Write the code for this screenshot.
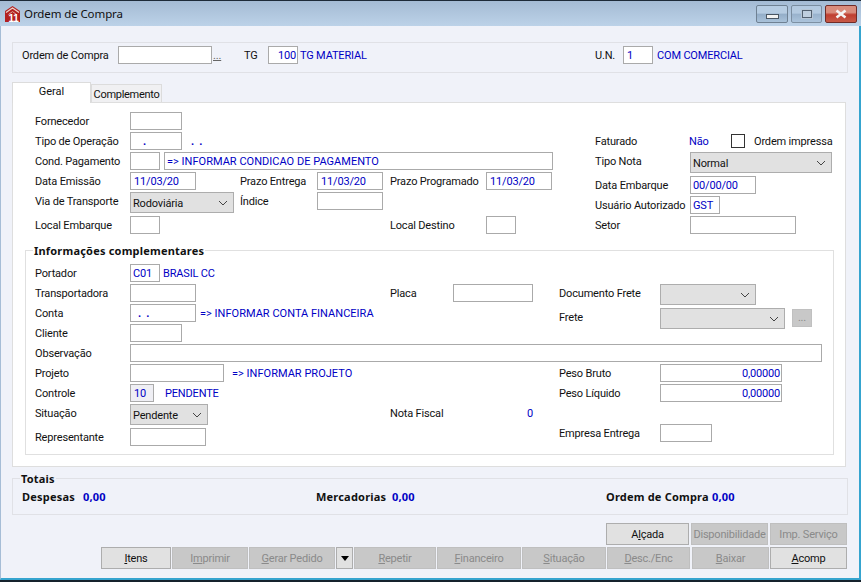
<div class="window">
  <header class="titlebar">
    <svg class="logo" viewBox="0 0 15 16" width="15" height="16" aria-hidden="true">
      <path d="M7.5 0 15 5V16H0V5Z" fill="#b3201f"/>
      <path d="M1 6.5 7.5 2 14 6.5" fill="none" stroke="#ecd2ca" stroke-width="1.3"/>
      <path d="M3.5 8.5 7.5 5.6 11.5 8.5" fill="none" stroke="#dda699" stroke-width="1"/>
      <text x="3.5" y="15.5" class="logo-num">11</text>
    </svg>
    <span class="title">Ordem de Compra</span>
    <div class="controls">
      <div class="ctl"><span class="min"></span></div>
      <div class="ctl mid"><span class="max"></span></div>
      <div class="ctl close">
        <svg viewBox="0 0 14 10" width="14" height="10" aria-hidden="true">
          <path d="M2.5 1.5 11.5 8.5M11.5 1.5 2.5 8.5" stroke="#f4f4f4" stroke-width="2.6"/>
        </svg>
      </div>
    </div>
  </header>

  <main class="body">
    <section class="topbox">
      <span class="t w96">Ordem de Compra</span>
      <span class="inp w94"></span>
      <span class="ellipsis">...</span>
      <span class="t tg">TG</span>
      <span class="inp w30 num">100</span>
      <span class="v ml2 w295">TG MATERIAL</span>
      <span class="t un">U.N.</span>
      <span class="inp w30">1</span>
      <span class="v ml4">COM COMERCIAL</span>
    </section>

    <nav class="tabs">
      <div class="tab active">Geral</div>
      <div class="tab">Complemento</div>
    </nav>

    <section class="panel">
      <div class="upper">
        <div class="col-left">
          <div class="row"><span class="t w95">Fornecedor</span><span class="inp w51"></span></div>
          <div class="row"><span class="t w95">Tipo de Operação</span><span class="inp w51 dot1">.</span><span class="v dots">.&nbsp;&nbsp;.</span></div>
          <div class="row"><span class="t w95">Cond. Pagamento</span><span class="inp w30"></span><span class="inp w388 ml4 long tight">=&gt; INFORMAR CONDICAO DE PAGAMENTO</span></div>
          <div class="row"><span class="t w95">Data Emissão</span><span class="inp w66">11/03/20</span><span class="t w77 ml44">Prazo Entrega</span><span class="inp w66">11/03/20</span><span class="t w96 ml7">Prazo Programado</span><span class="inp w66">11/03/20</span></div>
          <div class="row tall"><span class="t w95">Via de Transporte</span><div class="sel w104">Rodoviária<svg class="chev" viewBox="0 0 10 6" width="10" height="6"><path d="M1 1l4 4 4-4" fill="none" stroke="#444"/></svg></div><span class="t w77 ml6">Índice</span><span class="inp w66"></span></div>
          <div class="row"><span class="t w95">Local Embarque</span><span class="inp w30"></span><span class="t w96 local">Local Destino</span><span class="inp w30"></span></div>
        </div>
        <div class="col-right">
          <div class="row"><span class="t w94">Faturado</span><span class="v w42">Não</span><span class="check"></span><span class="t">Ordem impressa</span></div>
          <div class="row tall"><span class="t w95">Tipo Nota</span><div class="sel w142">Normal<svg class="chev" viewBox="0 0 10 6" width="10" height="6"><path d="M1 1l4 4 4-4" fill="none" stroke="#444"/></svg></div></div>
          <div class="row"><span class="t w95">Data Embarque</span><span class="inp w66 tight">00/00/00</span></div>
          <div class="row"><span class="t w95">Usuário Autorizado</span><span class="inp w30 tight">GST</span></div>
          <div class="row"><span class="t w95">Setor</span><span class="inp w106"></span></div>
        </div>
      </div>

      <div class="group">
        <div class="legend">Informações complementares</div>
        <div class="row"><span class="t w95">Portador</span><span class="inp w30 tight">C01</span><span class="v ml3">BRASIL CC</span></div>
        <div class="row"><span class="t w95">Transportadora</span><span class="inp w66"></span><span class="t placa">Placa</span><span class="inp w80"></span><span class="t w101 ml27">Documento Frete</span><div class="sel w96"><svg class="chev" viewBox="0 0 10 6" width="10" height="6"><path d="M1 1l4 4 4-4" fill="none" stroke="#444"/></svg></div></div>
        <div class="row"><span class="t w95">Conta</span><span class="inp w66 dot2">. &nbsp;.</span><span class="v ml4 w359 long">=&gt; INFORMAR CONTA FINANCEIRA</span>
          <div class="frete"><span class="t w101">Frete</span><div class="sel w125"><svg class="chev" viewBox="0 0 10 6" width="10" height="6"><path d="M1 1l4 4 4-4" fill="none" stroke="#444"/></svg></div><span class="morebtn">...</span></div>
        </div>
        <div class="row"><span class="t w95">Cliente</span><span class="inp w51"></span></div>
        <div class="row"><span class="t w95">Observação</span><span class="inp w692"></span></div>
        <div class="row"><span class="t w95">Projeto</span><span class="inp w94"></span><span class="v ml8 w327 long">=&gt; INFORMAR PROJETO</span><span class="t w101">Peso Bruto</span><span class="inp w122 num">0,00000</span></div>
        <div class="row"><span class="t w95">Controle</span><span class="inp w24 ro">10</span><span class="v ml11 w394">PENDENTE</span><span class="t w101">Peso Líquido</span><span class="inp w122 num">0,00000</span></div>
        <div class="row"><span class="t w95">Situação</span><div class="sel w78">Pendente<svg class="chev" viewBox="0 0 10 6" width="10" height="6"><path d="M1 1l4 4 4-4" fill="none" stroke="#444"/></svg></div><span class="t nf">Nota Fiscal</span><span class="v nf0">0</span></div>
        <div class="row last"><span class="t w95 down">Representante</span><span class="inp w76 down"></span><span class="t w101 emp">Empresa Entrega</span><span class="inp w52"></span></div>
      </div>
    </section>

    <section class="totais">
      <div class="legend tl">Totais</div>
      <div class="tot-row">
        <span class="w61">Despesas</span><span class="bv w233">0,00</span>
        <span class="w76">Mercadorias</span><span class="bv w214">0,00</span>
        <span class="w106">Ordem de Compra</span><span class="bv">0,00</span>
      </div>
    </section>

    <div class="btns r1">
      <button class="on">A<u>l</u>çada</button>
      <button disabled>Disponibilidade</button>
      <button disabled>Imp. Serviço</button>
    </div>
    <div class="btns r2">
      <button class="on"><u>I</u>tens</button>
      <button disabled>I<u>m</u>primir</button>
      <button disabled><u>G</u>erar Pedido</button>
      <button class="on arrow" aria-label="Menu"><span class="tri"></span></button>
      <button disabled><u>R</u>epetir</button>
      <button disabled><u>F</u>inanceiro</button>
      <button disabled><u>S</u>ituação</button>
      <button disabled><u>D</u>esc./Enc</button>
      <button disabled class="gap"><u>B</u>aixar</button>
      <button class="on"><u>A</u>comp</button>
    </div>
  </main>
</div>

<style>
  :global(body) { margin: 0; background: #10202c; }
  .window {
    width: 861px; height: 582px; box-sizing: border-box; overflow: hidden;
    display: flex; flex-direction: column;
    background: #f0f2f9;
    border-top: 1px solid #1d2a38;
    border-bottom: 2px solid #15222c;
    font: 11px/20px Roboto, Tahoma, sans-serif;
    letter-spacing: -.17px;
    color: #111;
  }
  .titlebar {
    height: 25px; flex: none; display: flex; align-items: center;
    padding: 0 4px 0 5px;
    background: linear-gradient(#a4bbd4, #bcd2e8);
  }
  .logo { flex: none; margin-top: 1px; }
  .logo-num { font: bold 10px "Liberation Sans", sans-serif; fill: #fff; }
  .title { margin-left: 4px; font: 11.5px "Noto Sans", sans-serif; letter-spacing: -.1px; color: #101010; }
  .controls { margin-left: auto; display: flex; gap: 3px; margin-top: 1px; }
  .ctl {
    width: 32px; height: 18px; border: 1px solid #6f8193; border-radius: 2px;
    box-sizing: border-box; display: flex; align-items: center; justify-content: center;
    background: linear-gradient(#b6cce2 0 45%, #93adc8 50%, #a9c2da);
  }
  .mid { width: 31px; opacity: .8; }
  .min { width: 11px; height: 3px; margin-top: 4px; background: #f2f2f2; border: 1px solid #4a5663; }
  .max { width: 8px; height: 6px; border: 1px solid #3d4854; outline: 1px solid #b8c6d4; background: #c4d1de; }
  .close { border-color: #702c28; background: linear-gradient(#d98c7c 0 40%, #bf3e30 55%, #c85a48); }

  .body {
    flex: 1; display: flex; flex-direction: column; padding: 16px 0 0 12px;
    border-left: 1px solid #a6bdd6; border-right: 2px solid #35a4cf; border-bottom: 2px solid #35a4cf;
  }
  .topbox {
    width: 836px; height: 31px; box-sizing: border-box; flex: none;
    border: 1px solid #e0e1e6; margin-left: -1px;
    display: flex; align-items: flex-start; padding: 3px 0 0 9px;
  }
  .t, .v { flex: none; white-space: nowrap; }
  .v { color: #0000c4; }
  .inp {
    flex: none; height: 18px; box-sizing: border-box; background: #fff;
    border: 1px solid #aaa; color: #0000c4; padding: 0 0 0 3px; line-height: 18px;
    white-space: nowrap; overflow: hidden;
  }
  .inp.tight { padding-left: 2px; }
  .long { letter-spacing: .02px; }
  .num { text-align: right; padding: 0 1px 0 0; }
  .ro { background: #efeff4; }
  .ellipsis { width: 10px; margin-left: 1px; color: #666; text-decoration: underline; line-height: 20px; }
  .tg { margin-left: 21px; width: 24px; }
  .un { width: 28px; }
  .ml2 { margin-left: 2px; } .ml3 { margin-left: 3px; } .ml4 { margin-left: 4px; } .ml6 { margin-left: 6px; }
  .ml7 { margin-left: 7px; } .ml8 { margin-left: 8px; } .ml11 { margin-left: 11px; } .ml27 { margin-left: 26px; } .ml44 { margin-left: 44px; }
  .w24 { width: 24px; } .w30 { width: 30px; } .w42 { width: 42px; } .w51 { width: 52px; } .w52 { width: 52px; }
  .w61 { width: 61px; } .w66 { width: 66px; } .w76 { width: 76px; } .w77 { width: 77px; } .w78 { width: 78px; }
  .w80 { width: 80px; } .w94 { width: 94px; } .w95 { width: 95px; } .w96 { width: 96px; } .w101 { width: 101px; }
  .w104 { width: 104px; } .w106 { width: 106px; } .w122 { width: 122px; } .w125 { width: 125px; } .w142 { width: 142px; }
  .w214 { width: 214px; } .w233 { width: 233px; } .w295 { width: 295px; } .w327 { width: 327px; } .w359 { width: 359px; } .w388 { width: 389px; } .w394 { width: 394px; } .w692 { width: 692px; }

  .tabs { display: flex; align-items: flex-end; height: 20px; margin-top: 9px; flex: none; margin-left: -1px; }
  .tab {
    box-sizing: border-box; height: 18px; width: 71px; line-height: 19px; text-align: center;
    background: #f0f0f2; border: 1px solid #dcdcdc; border-bottom: 0; letter-spacing: -.3px;
  }
  .tab.active {
    width: 79px; height: 21px; margin-bottom: -1px; background: #fff; position: relative; z-index: 1;
    line-height: 18px; letter-spacing: 0;
  }
  .panel {
    width: 834px; height: 365px; box-sizing: border-box; flex: none; margin-left: -1px;
    background: #fff; border: 1px solid #dedede; padding-top: 9px;
  }
  .upper { display: flex; height: 138px; padding-left: 22px; }
  .col-left { width: 518px; flex: none; }
  .col-right { margin-left: 42px; padding-top: 20px; }
  .row { display: flex; height: 20px; align-items: flex-start; }
  .row.tall { height: 24px; }
  .dot1 { padding-left: 12px; font-weight: 700; }
  .dots { margin-left: 9px; font-weight: 700; }
  .dot2 { padding-left: 7px; font-weight: 700; }
  .local { margin-left: 230px; }
  .sel {
    flex: none; position: relative; box-sizing: border-box; height: 21px; background: #e1e1e1;
    border: 1px solid #adadad; padding-left: 2px; line-height: 21px;
  }
  .chev { position: absolute; right: 5px; top: 7px; }
  .check { width: 12px; height: 12px; border: 1px solid #333; background: #fff; margin: 2px 9px 0 0; flex: none; }

  .group {
    position: relative; box-sizing: border-box; width: 809px; height: 205px; margin-left: 12px;
    border: 1px solid #e0e0e0; padding: 13px 0 0 9px;
  }
  .legend {
    position: absolute; top: -8px; left: 7px; padding: 0 1px; background: #fff;
    font: bold 11px/15px "Noto Sans", sans-serif; color: #111; letter-spacing: .2px;
  }
  .placa { margin-left: 194px; width: 63px; }
  .frete { display: flex; align-items: flex-start; margin-top: 4px; }
  .morebtn {
    flex: none; width: 20px; height: 18px; margin: 1px 0 0 7px; background: #c8c8c8; border: 1px solid #c0c0c0;
    box-sizing: border-box; color: #888; text-align: center; line-height: 16px;
  }
  .nf { margin-left: 182px; width: 137px; }
  .nf0 { width: 10px; }
  .last { height: 24px; }
  .down { margin-top: 4px; }
  .emp { margin-left: 353px; }

  .totais {
    position: relative; width: 836px; height: 37px; box-sizing: border-box; flex: none; margin: 11px 0 0 -1px;
    border: 1px solid #e0e1e6; padding: 9px 0 0 9px;
  }
  .tl { background: #f0f2f9; top: -8px; left: 7px; }
  .tot-row { display: flex; white-space: nowrap; font: bold 11px/18px "Noto Sans", sans-serif; letter-spacing: .2px; }
  .bv { color: #0000c4; }

  .btns { display: grid; justify-content: end; flex: none; padding-right: 12px; gap: 1px; }
  .r1 { margin-top: 8px; grid-template-columns: 83px 77px 77px; column-gap: 2px; }
  .r2 { margin-top: 2px; grid-template-columns: 70px 76px 86px 17px 82px 84px 84px 83px 78px 77px; }
  .gap { margin-left: 1px; }
  button {
    height: 22px; padding: 0; font: 11px Roboto, Tahoma, sans-serif; letter-spacing: -.2px; box-sizing: border-box;
    background: #c8c8c8; border: 1px solid #bfbfbf; color: #8a8a8a; white-space: nowrap; overflow: hidden;
  }
  button.on { background: #e1e1e1; border-color: #adadad; color: #111; }
  .tri { display: inline-block; border: 4px solid transparent; border-top: 5px solid #000; border-bottom: 0; vertical-align: middle; }
</style>
